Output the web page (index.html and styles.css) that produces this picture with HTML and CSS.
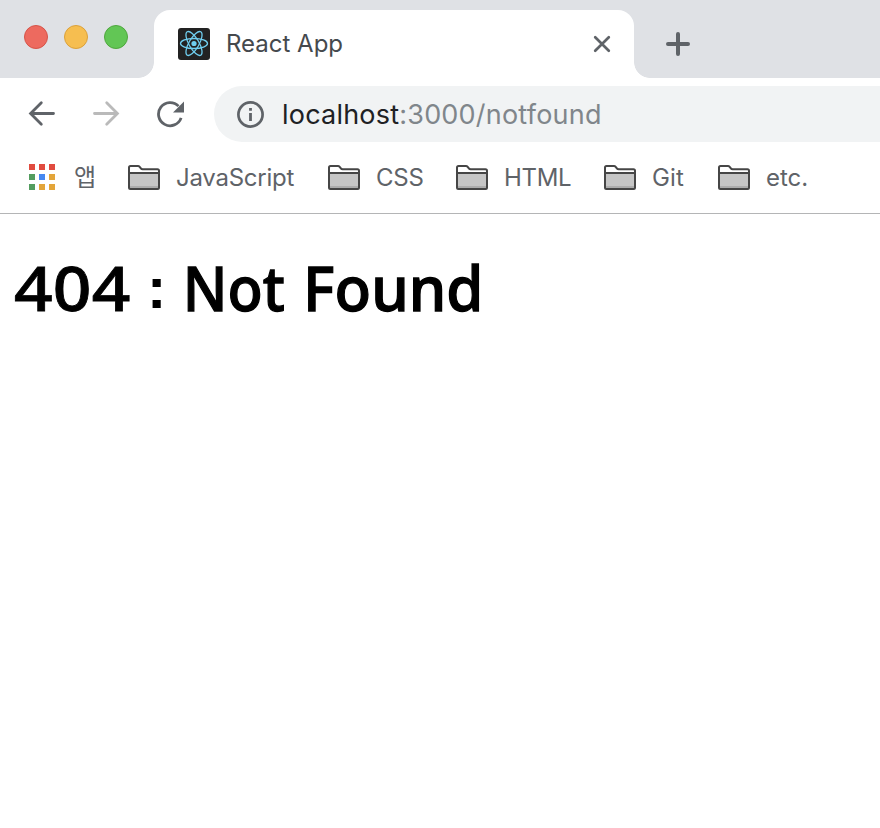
FILE: index.html
```html
<!DOCTYPE html>
<html lang="ko">
<head>
<meta charset="utf-8">
<title>React App</title>
<link rel="stylesheet" href="styles.css">
</head>
<body>
<svg width="0" height="0" class="defs" aria-hidden="true">
  <symbol id="folder" viewBox="0 0 32 26">
    <path d="M1 8h30v15.500q0 1.500-1.500 1.500h-27Q1 25 1 23.500z" fill="#c6c6c6"/>
    <path d="M2 21h28v2H2z" fill="#adadad"/>
    <path d="M1 8h30M1 22.500v-20Q1 1 2.500 1H10q1 0 1.700.8L13 3.500q.6.700 1.600.7h14.900q1.500 0 1.500 1.500v16.800q0 1.500-1.500 1.500h-27Q1 24 1 22.500z" fill="none" stroke="#464646" stroke-width="2"/>
  </symbol>
</svg>
<header class="browser">
  <div class="tabstrip">
    <div class="lights"><i class="red"></i><i class="yellow"></i><i class="green"></i></div>
    <div class="tab">
      <svg class="favicon" viewBox="0 0 32 32">
        <rect width="32" height="32" rx="3" fill="#222"/>
        <g fill="none" stroke="#70cff0" stroke-width="1.300">
          <ellipse cx="16" cy="15.500" rx="13.500" ry="5"/>
          <ellipse cx="16" cy="15.500" rx="13.500" ry="5" transform="rotate(60 16 15.500)"/>
          <ellipse cx="16" cy="15.500" rx="13.500" ry="5" transform="rotate(120 16 15.500)"/>
        </g>
        <circle cx="16" cy="15.500" r="2.600" fill="#70cff0"/>
      </svg>
      <span class="title">React App</span>
      <svg class="close" viewBox="0 0 18 18"><path d="M2.200 2.200l13.600 13.600M15.800 2.200L2.200 15.800" stroke="#5f6368" stroke-width="2.700" stroke-linecap="round"/></svg>
    </div>
    <svg class="plus" viewBox="0 0 24 24"><path d="M12 2v20M2 12h20" stroke="#5f6368" stroke-width="4" stroke-linecap="round"/></svg>
  </div>
  <div class="toolbar">
    <svg class="nav" viewBox="0 0 28 28"><path d="M13.300 2.800L2.600 13.500l10.700 10.700M3 13.500h22.500" fill="none" stroke="#5f6368" stroke-width="2.800" stroke-linecap="round"/></svg>
    <svg class="nav" viewBox="0 0 28 28"><path d="M14.700 2.800L25.400 13.500 14.700 24.200M25 13.500H2.500" fill="none" stroke="#bababa" stroke-width="2.800" stroke-linecap="round"/></svg>
    <svg class="nav" viewBox="0 0 28 28"><path d="M25.100 17.900A11.600 11.600 0 1 1 22.500 6.100" fill="none" stroke="#5f6368" stroke-width="2.800"/><path d="M28 1.500v11H17z" fill="#5f6368"/></svg>
    <div class="omnibox">
      <svg class="info" viewBox="0 0 28 28"><circle cx="14.500" cy="14.500" r="12.100" fill="none" stroke="#5f6368" stroke-width="2.700"/><path d="M13.100 8h2.800v2.700h-2.800zM13.100 13h2.800v8h-2.800z" fill="#5f6368"/></svg>
      <span class="url">localhost<span class="path">:3000/notfound</span></span>
    </div>
  </div>
  <nav class="bookmarks">
    <div class="apps"><i class="r"></i><i class="r"></i><i class="r"></i><i class="g"></i><i class="b"></i><i class="y"></i><i class="g"></i><i class="y"></i><i class="y"></i></div>
    <span class="label ko">앱</span>
    <svg class="folder"><use href="#folder"/></svg><span class="label js">JavaScript</span>
    <svg class="folder"><use href="#folder"/></svg><span class="label css">CSS</span>
    <svg class="folder"><use href="#folder"/></svg><span class="label html">HTML</span>
    <svg class="folder"><use href="#folder"/></svg><span class="label git">Git</span>
    <svg class="folder"><use href="#folder"/></svg><span class="label etc">etc.</span>
  </nav>
</header>
<main><h1><span class="code">404</span> <span class="colon">:</span> <span class="word not">Not</span> <span class="word">Found</span></h1></main>
</body>
</html>
```
FILE: styles.css
```css
* { box-sizing: border-box; }
body { margin: 0; background: #fff; font-family: Inter, "Noto Sans CJK KR", sans-serif; overflow: hidden; }
svg { display: block; flex: none; }
.defs { position: absolute; }
.tabstrip { height: 78px; background: #dfe1e5; display: flex; align-items: flex-start; }
.lights { display: flex; gap: 16px; padding: 25px 0 0 24px; width: 154px; height: 78px; }
.lights i { width: 24px; height: 24px; border-radius: 50%; border: 1px solid; }
.lights .red { background: #ed6a5f; border-color: #d65449; }
.lights .yellow { background: #f6be50; border-color: #dba13b; }
.lights .green { background: #62c655; border-color: #4fa73e; }
.tab { margin-top: 10px; width: 480px; height: 68px; background: #fff; border-radius: 16px 16px 0 0; display: flex; align-items: center; padding: 0 23px 0 24px; position: relative; }
.tab::before, .tab::after { content: ""; position: absolute; bottom: 0; width: 16px; height: 16px; }
.tab::before { left: -16px; background: radial-gradient(circle at 0 0, transparent 15.500px, #fff 16.200px); }
.tab::after { right: -16px; background: radial-gradient(circle at 100% 0, transparent 15.500px, #fff 16.200px); }
.favicon { width: 32px; height: 32px; }
.title { margin-left: 16px; font-size: 24px; line-height: 32px; color: #45494d; flex: 1; white-space: nowrap; }
.close { width: 18px; height: 18px; }
.plus { width: 24px; height: 24px; margin: 32px 0 0 32px; }
.toolbar { height: 72px; display: flex; align-items: center; gap: 36px; padding-left: 28px; }
.nav { width: 28px; height: 28px; }
.omnibox { margin-left: -6px; flex: 1; height: 56px; border-radius: 28px 0 0 28px; background: #f1f3f4; display: flex; align-items: center; padding-left: 22px; }
.info { width: 28px; height: 28px; }
.url { margin: 2px 0 0 18px; font-size: 27px; line-height: 36px; letter-spacing: 0.210px; color: #202124; white-space: nowrap; }
.path { color: #80868b; }
.bookmarks { height: 64px; border-bottom: 1px solid #b4b5b6; display: flex; align-items: flex-start; padding: 14px 0 0 29px; }
.apps { display: grid; grid-template-columns: repeat(3, 6px); grid-auto-rows: 6px; gap: 4px; width: 26px; }
.r { background: #e14b3f; } .g { background: #539d5f; } .b { background: #4688f1; } .y { background: #e3a53a; }
.folder { width: 32px; height: 26px; margin-top: 1px; }
.label { font-size: 24px; line-height: 28px; color: #5f6368; padding-left: 16px; white-space: nowrap; }
.ko { width: 73px; padding-left: 19px; }
.js { width: 168px; letter-spacing: -0.250px; }
.css { width: 96px; letter-spacing: -0.200px; }
.html { width: 116px; letter-spacing: -0.300px; }
.git { width: 82px; letter-spacing: 0.200px; }
main { padding: 0 14px; }
h1 { margin: 30px 0 0; display: flex; font: 500 62px/86px "Noto Sans", sans-serif; color: #000; white-space: nowrap; -webkit-text-stroke: 0.800px #000; }
.code, .word { transform-origin: 0 50%; }
.code { width: 133px; letter-spacing: 0.200px; transform: scaleX(1.090); }
.colon { width: 34px; font-family: "Liberation Sans", sans-serif; font-weight: 700; font-size: 58px; line-height: 88px; height: 86px; -webkit-text-stroke: 0; }
.word { width: 180px; transform: scaleX(0.965); -webkit-text-stroke-width: 1.300px; }
.not { width: 122px; transform: scaleX(0.930); padding-left: 2px; }
```
